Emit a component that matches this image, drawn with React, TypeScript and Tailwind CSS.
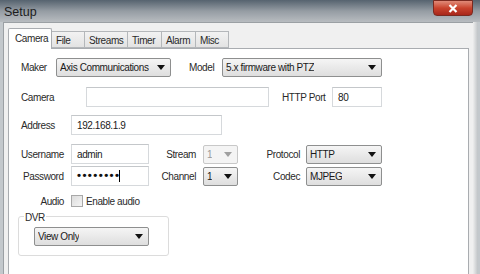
import React from 'react';

const font = { fontFamily: '"Liberation Sans", Arial, sans-serif' };

function Arrow({ disabled }: { disabled?: boolean }) {
  return (
    <svg width="8" height="5" viewBox="0 0 8 5" className="shrink-0">
      <path d="M0 0 L8 0 L4 5 Z" fill={disabled ? '#a0a0a0' : '#111'} />
    </svg>
  );
}

function Select({ value, w, disabled }: { value: string; w: string; disabled?: boolean }) {
  return (
    <div
      className={`${w} h-[19px] shrink-0 flex items-center justify-between pl-[3px] pr-[5px] rounded-[2px] border ${
        disabled
          ? 'border-[#c8c8c8] bg-[#f4f4f4] text-[#9a9a9a]'
          : 'border-[#8e8f8f] bg-gradient-to-b from-[#f5f5f5] to-[#dedede] text-[#1a1a1a]'
      }`}
    >
      <span className="truncate">{value}</span>
      <Arrow disabled={disabled} />
    </div>
  );
}

function Input({ value, w, children }: { value?: string; w: string; children?: React.ReactNode }) {
  return (
    <div className={`${w} h-[20px] shrink-0 flex items-center pl-[5px] bg-white border border-[#d6d9dc] border-t-[#c4c7ca] text-[#1a1a1a]`}>
      {value}
      {children}
    </div>
  );
}

const tabs = ['File', 'Streams', 'Timer', 'Alarm', 'Misc'];
const tabW = ['w-[33px]', 'w-[43px]', 'w-[34px]', 'w-[34px]', 'w-[33px]'];

export default function App() {
  return (
    <div className="w-[480px] h-[274px] overflow-hidden bg-[#2b2b2b] flex flex-col text-[10px] tracking-[-0.4px] text-[#2a2a2a]" style={font}>
      {/* title bar */}
      <div className="h-[22px] shrink-0 flex items-start justify-between bg-gradient-to-b from-[#56636f] via-[#959ca3] to-[#b8bcc0]">
        <span className="pl-[4px] pt-[3px] text-[12.5px] tracking-normal text-[#1c1c1c]">Setup</span>
        <div className="mr-[7px] w-[40px] h-[16px] rounded-b-[4px] border border-[#7a2a20] bg-gradient-to-b from-[#e08a78] via-[#c9432d] to-[#a8261a] flex items-center justify-center">
          <svg width="10" height="9" viewBox="0 0 10 9">
            <path d="M1.5 1 L8.5 8 M8.5 1 L1.5 8" stroke="#fff" strokeWidth="2.2" />
          </svg>
        </div>
      </div>

      {/* window frame */}
      <div className="h-[280px] shrink-0 flex bg-[#c3c8cc] pl-[3px] pr-[2px]">
        <div className="flex-1 flex flex-col bg-[#f0f0f0] border-l border-t border-[#9ba0a4] pl-[4px] pr-[4px] pt-[4px]">
          {/* tabs */}
          <div className="flex items-end h-[21px] shrink-0">
            <div className="w-[44px] h-[21px] bg-white border border-b-0 border-[#a9acb0] rounded-t-[2px] pl-[6px] pt-[2px] relative z-10 -mb-px">
              Camera
            </div>
            {tabs.map((t, i) => (
              <div
                key={t}
                className={`${tabW[i]} h-[17px] border border-l-0 border-[#b4b7ba] bg-gradient-to-b from-[#f2f2f2] to-[#e3e3e3] pl-[4px] pt-[1px]`}
              >
                {t}
              </div>
            ))}
          </div>

          {/* panel */}
          <div className="flex-1 bg-white border border-[#a9acb0] pt-[9px] pl-[12px]">
            <div className="flex items-center">
              <span className="w-[35px]">Maker</span>
              <Select value="Axis Communications" w="w-[115px]" />
              <span className="ml-[18px] w-[33px]">Model</span>
              <Select value="5.x firmware with PTZ" w="w-[160px]" />
            </div>

            <div className="flex items-center mt-[10px]">
              <span className="w-[65px]">Camera</span>
              <Input w="w-[183px]" />
              <span className="ml-[13px] w-[50px]">HTTP Port</span>
              <Input value="80" w="w-[50px]" />
            </div>

            <div className="flex items-center mt-[8px]">
              <span className="w-[50px]">Address</span>
              <Input value="192.168.1.9" w="w-[151px]" />
            </div>

            <div className="flex items-center mt-[9px]">
              <span className="w-[50px]">Username</span>
              <Input value="admin" w="w-[78px]" />
              <span className="w-[47px] text-right">Stream</span>
              <div className="w-[7px]" />
              <Select value="1" w="w-[35px]" disabled />
              <span className="w-[62px] text-right">Protocol</span>
              <div className="w-[6px]" />
              <Select value="HTTP" w="w-[76px]" />
            </div>

            <div className="flex items-center mt-[2px]">
              <span className="w-[50px] pl-[2px]">Password</span>
              <Input w="w-[78px]">
                <span className="text-[11.5px] font-bold tracking-[1.4px] text-[#111]">••••••••</span>
                <span className="ml-[-1px] w-px h-[12px] bg-black" />
              </Input>
              <span className="w-[47px] text-right">Channel</span>
              <div className="w-[7px]" />
              <Select value="1" w="w-[35px]" />
              <span className="w-[62px] text-right">Codec</span>
              <div className="w-[6px]" />
              <Select value="MJPEG" w="w-[76px]" />
            </div>

            <div className="flex items-center mt-[9px] h-[12px]">
              <span className="w-[43px] text-right">Audio</span>
              <div className="ml-[7px] w-[12px] h-[12px] border border-[#a8a8a8] bg-gradient-to-br from-[#dcdcdc] to-[#f4f4f4]" />
              <span className="ml-[3px]">Enable audio</span>
            </div>

            <div className="mt-[9px] ml-[-3px] w-[151px] h-[40px] border border-[#dcdcdc] rounded-[3px] relative pl-[15px] pt-[10px]">
              <span className="absolute -top-[7px] left-[5px] bg-white px-[1px]">DVR</span>
              <Select value="View Only" w="w-[115px]" />
            </div>
          </div>
        </div>
        <div className="w-[5px] bg-gradient-to-r from-[#eeeeee] to-[#bfc3c6]" />
      </div>
    </div>
  );
}
